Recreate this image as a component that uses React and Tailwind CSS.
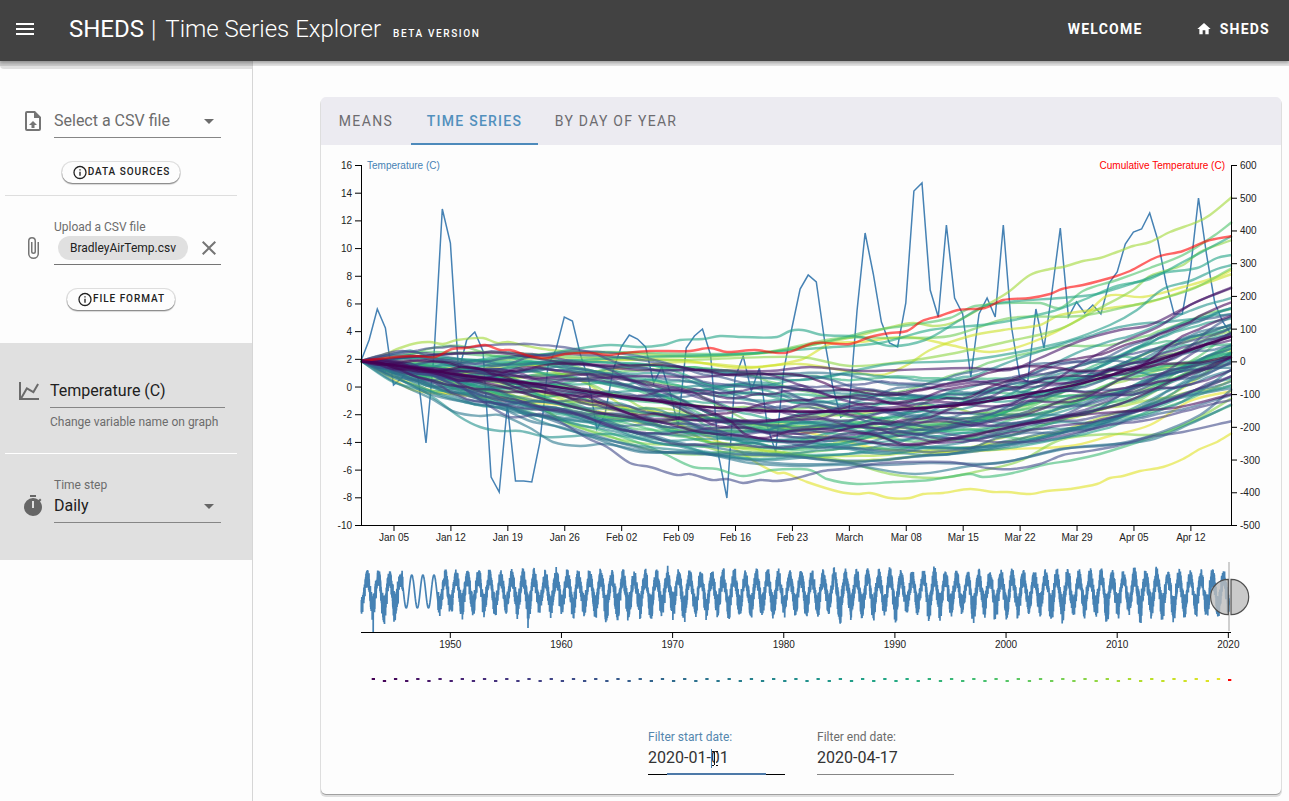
import React from "react";

const ICONS = {
  menu: "M3,6H21V8H3V6M3,11H21V13H3V11M3,16H21V18H3V16Z",
  home: "M10,20V14H14V20H19V12H22L12,3L2,12H5V20H10Z",
  fileUpload:
    "M14,2L20,8V20A2,2 0 0,1 18,22H6A2,2 0 0,1 4,20V4A2,2 0 0,1 6,2H14M18,20V9H13V4H6V20H18M12,12L16,16H13.5V19H10.5V16H8L12,12Z",
  paperclip:
    "M16.5,6V17.5A4,4 0 0,1 12.5,21.5A4,4 0 0,1 8.5,17.5V5A2.5,2.5 0 0,1 11,2.5A2.5,2.5 0 0,1 13.5,5V15.5A1,1 0 0,1 12.5,16.5A1,1 0 0,1 11.5,15.5V6H10V15.5A2.5,2.5 0 0,0 12.5,18A2.5,2.5 0 0,0 15,15.5V5A4,4 0 0,0 11,1A4,4 0 0,0 7,5V17.5A5.5,5.5 0 0,0 12.5,23A5.5,5.5 0 0,0 18,17.5V6H16.5Z",
  chart:
    "M16,11.78L20.24,4.45L21.97,5.45L16.74,14.5L10.23,10.75L5.46,19H22V21H2V3H4V17.54L9.5,8L16,11.78Z",
  info: "M11,9H13V7H11M12,20C7.59,20 4,16.41 4,12C4,7.59 7.59,4 12,4C16.41,4 20,7.59 20,12C20,16.41 16.41,20 12,20M12,2A10,10 0 0,0 2,12A10,10 0 0,0 12,22A10,10 0 0,0 22,12A10,10 0 0,0 12,2M11,17H13V11H11V17Z",
  timer:
    "M19.03,7.39L20.45,5.97C20,5.46 19.55,5 19.04,4.56L17.62,6C16.07,4.74 14.12,4 12,4A9,9 0 0,0 3,13A9,9 0 0,0 12,22C17,22 21,17.97 21,13C21,10.88 20.26,8.93 19.03,7.39M13,14H11V7H13V14M15,1H9V3H15V1Z",
  close:
    "M19,6.41L17.59,5L12,10.59L6.41,5L5,6.41L10.59,12L5,17.59L6.41,19L12,13.41L17.59,19L19,17.59L13.41,12L19,6.41Z",
  down: "M7,10L12,15L17,10H7Z",
};

function Icon({ name, className }) {
  return (
    <svg viewBox="0 0 24 24" fill="currentColor" className={className}>
      <path d={ICONS[name]} />
    </svg>
  );
}

/* ---------- chart data ---------- */

function rng(seed) {
  let a = seed;
  return () => {
    a = (a + 0x6d2b79f5) | 0;
    let t = Math.imul(a ^ (a >>> 15), 1 | a);
    t = (t + Math.imul(t ^ (t >>> 7), 61 | t)) ^ t;
    return ((t ^ (t >>> 14)) >>> 0) / 4294967296;
  };
}

const VIRIDIS = [
  [68, 1, 84], [72, 36, 117], [65, 68, 135], [53, 95, 141], [42, 120, 142],
  [33, 145, 140], [34, 168, 132], [68, 191, 112], [122, 209, 81], [189, 223, 38], [240, 229, 40],
];
function viridis(t) {
  const p = Math.min(0.9999, Math.max(0, t)) * 10;
  const i = Math.floor(p);
  const c = VIRIDIS[i].map((v, k) => Math.round(v + (VIRIDIS[i + 1][k] - v) * (p - i)));
  return `rgb(${c.join(",")})`;
}

const X0 = 361.3;
const DAY = 8.131;

const DAILY = [
  361, 340, 309, 328, 385, 378, 368, 376, 443, 352, 209, 243, 372, 340, 332, 351, 477, 492, 405, 481,
  481, 482, 442, 366, 349, 317, 321, 355, 380, 429, 415, 370, 347, 335, 339, 347, 383, 367, 392, 426,
  348, 336, 329, 355, 457, 498, 378, 356, 391, 368, 427, 452, 370, 328, 289, 275, 282, 340, 386, 417,
  412, 311, 233, 274, 322, 343, 347, 303, 191, 183, 290, 317, 225, 298, 314, 377, 314, 298, 317, 225,
  327, 377, 382, 309, 348, 291, 228, 317, 302, 313, 305, 314, 283, 272, 244, 232, 229, 213, 240, 283,
  314, 314, 270, 198, 255, 303, 322, 334,
];
const dailyPath = "M" + DAILY.map((y, i) => `${(X0 - 0.3 + i * DAY).toFixed(1)},${y}`).join("L");

const MEAN = [[361, 361], [400, 366], [435, 371], [466, 376], [520, 382], [564, 388], [640, 399], [707, 407], [773, 411], [830, 411.5], [890, 410], [970, 404], [1017, 396], [1083, 383], [1150, 363], [1232, 336]];

function interp(pts, x) {
  if (x <= pts[0][0]) return pts[0][1];
  for (let i = 1; i < pts.length; i++) {
    if (x <= pts[i][0]) {
      const [xa, ya] = pts[i - 1];
      const [xb, yb] = pts[i];
      return ya + ((yb - ya) * (x - xa)) / (xb - xa);
    }
  }
  return pts[pts.length - 1][1];
}

function smooth(pts) {
  let d = `M${pts[0][0]},${pts[0][1]}`;
  for (let i = 0; i < pts.length - 1; i++) {
    const [p0, p1, p2, p3] = [pts[i - 1] || pts[i], pts[i], pts[i + 1], pts[i + 2] || pts[i + 1]];
    const m1 = (p2[1] - p0[1]) / (p2[0] - p0[0]);
    const m2 = (p3[1] - p1[1]) / (p3[0] - p1[0]);
    const h = (p2[0] - p1[0]) / 3;
    d += `C${(p1[0] + h).toFixed(1)},${(p1[1] + m1 * h).toFixed(1)} ${(p2[0] - h).toFixed(1)},${(p2[1] - m2 * h).toFixed(1)} ${p2[0]},${p2[1]}`;
  }
  return d;
}

const NAMED = [
  { c: 0.86, p: [[361, 361], [383, 355], [400, 348], [417, 343], [430, 342], [443, 344], [457, 340], [483, 338], [497, 343], [508, 342], [527, 346], [550, 350], [580, 352], [620, 353], [660, 355], [700, 357], [740, 355], [773, 352], [800, 347], [827, 342], [853, 337], [887, 328], [913, 323], [935, 326], [955, 322], [983, 307], [1007, 293], [1030, 275], [1050, 269], [1063, 267], [1083, 261], [1100, 258], [1117, 252], [1133, 246], [1150, 242], [1170, 232], [1197, 222], [1210, 215], [1232, 197]] },
  { c: 0.97, p: [[361, 361], [390, 377], [410, 389], [430, 393], [460, 394], [500, 400], [560, 405], [620, 415], [680, 425], [710, 438], [737, 450], [757, 463], [777, 473], [785, 473], [807, 482], [840, 492], [857, 494], [870, 493], [890, 498], [910, 498], [923, 494], [943, 493], [970, 489], [993, 492], [1007, 492], [1030, 494], [1047, 491], [1070, 489], [1097, 484], [1110, 478], [1123, 476], [1140, 471], [1163, 467], [1183, 459], [1200, 449], [1217, 442], [1232, 433]] },
  { c: 0.22, p: [[361, 361], [400, 368], [453, 380], [470, 393], [507, 416], [520, 417], [540, 414], [557, 420], [587, 438], [607, 447], [630, 463], [650, 467], [677, 475], [690, 474], [712, 480], [727, 479], [743, 483], [760, 480], [777, 481], [797, 478], [823, 471], [843, 469], [873, 464], [907, 462], [950, 462], [965, 464], [987, 468], [1013, 469], [1040, 464], [1063, 455], [1083, 452], [1117, 446], [1150, 437], [1183, 432], [1232, 421]] },
  { c: 0.5, p: [[361, 361], [393, 382], [420, 390], [437, 400], [460, 417], [480, 427], [500, 431], [520, 431], [547, 437], [575, 436], [610, 434], [640, 439], [670, 445], [720, 446], [780, 440], [840, 445], [900, 440], [970, 432], [1050, 415], [1140, 385], [1232, 345]] },
  { c: 0.4, p: [[361, 361], [393, 381], [430, 398], [455, 412], [480, 416], [500, 415], [530, 428], [553, 442], [580, 446], [605, 444], [650, 452], [700, 453], [750, 463], [800, 466], [850, 465], [915, 474], [970, 466], [1010, 461], [1070, 448], [1150, 440], [1190, 424], [1232, 404]] },
  { c: 0.38, p: [[361, 361], [393, 376], [430, 394], [470, 403], [500, 408], [530, 421], [560, 427], [600, 440], [640, 452], [690, 452], [740, 459], [790, 464], [850, 463], [900, 458], [970, 452], [1020, 444], [1070, 436], [1130, 414], [1180, 398], [1232, 388]] },
  { c: 0.33, p: [[361, 361], [430, 385], [490, 402], [540, 416], [590, 434], [650, 450], [700, 454], [760, 455], [820, 459], [870, 465], [930, 463], [1000, 463], [1060, 449], [1110, 445], [1150, 436], [1200, 415], [1232, 389]] },
  { c: 0.45, p: [[361, 361], [430, 380], [490, 398], [540, 421], [590, 436], [640, 446], [700, 452], [760, 460], [820, 456], [880, 452], [940, 455], [1000, 446], [1060, 432], [1120, 414], [1180, 384], [1232, 352]] },
  { c: 0.68, p: [[361, 361], [420, 375], [480, 398], [540, 415], [600, 430], [645, 445], [667, 455], [693, 467], [717, 469], [743, 476], [773, 470], [800, 469], [813, 471], [827, 479], [857, 484], [893, 482], [930, 480], [970, 474], [983, 477], [1013, 473], [1043, 465], [1073, 460], [1100, 454], [1150, 438], [1190, 423], [1232, 405]] },
  { c: 0.82, p: [[361, 361], [440, 372], [520, 398], [580, 428], [640, 443], [700, 446], [740, 456], [790, 455], [840, 460], [890, 474], [940, 478], [975, 472], [1020, 461], [1060, 440], [1110, 434], [1160, 434], [1200, 417], [1232, 398]] },
  { c: 0.98, p: [[361, 361], [430, 390], [500, 398], [580, 402], [660, 412], [740, 422], [820, 435], [880, 449], [950, 452], [1010, 449], [1070, 446], [1110, 436], [1150, 425], [1190, 401], [1232, 391]] },
  { c: 0.58, p: [[361, 361], [420, 357], [480, 360], [540, 355], [575, 349], [610, 345], [640, 347], [663, 345], [680, 340], [703, 339], [720, 336], [743, 337], [777, 337], [790, 331], [802, 330], [823, 335], [860, 337], [890, 346], [925, 340], [960, 320], [985, 306], [1017, 301], [1060, 298], [1097, 294], [1137, 282], [1163, 273], [1197, 268], [1217, 258], [1232, 255]] },
  { c: 0.72, p: [[361, 361], [430, 352], [500, 356], [600, 352], [700, 354], [770, 352], [830, 341], [870, 331], [910, 325], [950, 318], [975, 306], [1040, 303], [1060, 308], [1083, 291], [1117, 280], [1150, 268], [1183, 255], [1215, 235], [1232, 222]] },
  { c: 0.6, p: [[361, 361], [430, 358], [520, 362], [640, 357], [740, 354], [820, 348], [880, 343], [930, 330], [990, 324], [1050, 312], [1083, 300], [1117, 286], [1150, 279], [1183, 262], [1232, 236]] },
  { c: 0.83, p: [[361, 361], [450, 362], [560, 358], [680, 360], [800, 357], [850, 366], [900, 362], [950, 354], [1010, 341], [1060, 329], [1100, 308], [1133, 290], [1150, 276], [1183, 265], [1200, 252], [1232, 240]] },
  { c: 0.55, p: [[361, 361], [480, 366], [600, 362], [720, 372], [800, 380], [890, 364], [970, 360], [1060, 343], [1110, 325], [1137, 310], [1163, 289], [1190, 281], [1217, 269], [1232, 265]] },
  { c: 0.95, p: [[361, 361], [470, 369], [590, 361], [680, 360], [740, 368], [800, 360], [830, 344], [860, 342], [908, 337], [950, 345], [990, 352], [1030, 343], [1083, 317], [1107, 296], [1143, 297], [1183, 287], [1217, 277], [1232, 270]] },
  { c: 0.93, p: [[361, 361], [460, 378], [590, 372], [680, 362], [750, 367], [800, 364], [880, 375], [907, 365], [930, 350], [970, 336], [1003, 330], [1040, 325], [1060, 315], [1110, 308], [1150, 302], [1232, 274]] },
  { c: 0.78, p: [[361, 361], [480, 352], [560, 356], [650, 357], [760, 353], [840, 338], [900, 338], [950, 336], [1010, 318], [1080, 316], [1130, 306], [1190, 290], [1232, 268]] },
  { c: 0.06, p: [[361, 361], [450, 354], [500, 353], [560, 362], [640, 370], [700, 370], [770, 371], [810, 367], [860, 371], [900, 370], [970, 368], [1010, 370], [1040, 358], [1080, 341], [1120, 330], [1150, 325], [1190, 305], [1210, 296], [1232, 287]] },
  { c: 0.08, p: [[361, 361], [460, 371], [560, 379], [640, 376], [700, 377], [760, 373], [800, 385], [840, 399], [880, 408], [940, 402], [1000, 406], [1040, 390], [1080, 364], [1120, 343], [1160, 326], [1190, 305], [1232, 288]] },
  { c: 0.03, p: [[361, 361], [440, 373], [500, 386], [540, 398], [600, 413], [660, 422], [700, 432], [740, 436], [800, 442], [840, 438], [900, 445], [960, 437], [1020, 425], [1080, 415], [1130, 411], [1180, 407], [1232, 394]] },
  { c: 0.04, p: [[361, 361], [440, 371], [520, 384], [600, 396], [660, 400], [700, 408], [730, 421], [745, 434], [765, 438], [790, 431], [820, 429], [870, 434], [910, 445], [960, 438], [1020, 425], [1060, 417], [1120, 404], [1180, 377], [1232, 357]] },
];

const FAMILY = (() => {
  const out = [];
  const total = 62;
  for (let i = 0; i < total; i++) {
    const r = rng(1943 + i * 7919);
    const g = () => (r() + r() + r() + r() - 2) * 1.73;
    let v = g() * 1.2 + 0.2;
    let dev = 0;
    const pts = [];
    for (let d = 0; d <= 107; d++) {
      const x = X0 + d * DAY;
      const limit = dev < 0 ? 54 : 64 + (d > 75 ? (d - 75) * 0.3 : 0);
      const bounded = limit * Math.tanh(dev / limit);
      pts.push([x.toFixed(1), (interp(MEAN, x) + bounded).toFixed(1)]);
      v = v * 0.78 + g() * 1.05 + 0.05;
      dev = dev * 0.99 + v;
    }
    // Hue index is spread so that the mid-range years dominate the band.
    const u = i / (total - 1);
    out.push({ c: u < 0.9 ? u : 0.4 + (u - 0.9) * 3, d: "M" + pts.join("L") });
  }
  return out;
})();

const LINES = [...FAMILY, ...NAMED.map((n) => ({ c: n.c, d: smooth(n.p) }))].sort((a, b) => b.c - a.c);

const RED = smooth([[361, 361], [395, 357], [418, 356], [435, 357], [452, 349], [465, 348], [485, 345], [500, 350], [510, 350], [530, 356], [547, 358], [565, 354], [590, 353], [610, 355], [625, 353], [650, 351], [690, 351], [710, 348], [727, 352], [755, 350], [785, 353], [815, 343], [850, 344], [870, 337], [890, 333], [907, 331], [922, 321], [940, 316], [958, 310], [985, 308], [1003, 300], [1030, 298], [1050, 294], [1062, 289], [1083, 285], [1110, 278], [1130, 271], [1157, 257], [1183, 251], [1207, 241], [1232, 236]]);

const YEAR = 11.12;
const OVERVIEW = (() => {
  const r = rng(77);
  const pts = [];
  const peaks = Array.from({ length: 80 }, () => [r() * 4 - 1.5, r() * 11 - 5]);
  for (let x = 361.3; x <= 1229.2; x += 0.1) {
    const t = (x - 361.3) / YEAR;
    const s = (1 - Math.cos(2 * Math.PI * (t - 0.04))) / 2;
    if (x > 403 && x < 438) {
      pts.push(`${x.toFixed(1)},${(608 - 33 * s).toFixed(1)}`);
      continue;
    }
    const [pk, tr] = peaks[Math.floor(t + (s < 0.5 ? 0.5 : 0))];
    const mid = 604 - 27 * s;
    const up = 11 - s + pk * s;
    const down = (1 - s) * (18 + tr) + s * 11;
    const n = (r() * 2 - 1) * (0.7 + 0.3 * r());
    pts.push(`${x.toFixed(1)},${(mid + (n < 0 ? n * up : n * down)).toFixed(1)}`);
    if (Math.abs(x - 373.2) < 0.05) pts.push("373.2,632");
    if (Math.abs(x - 528) < 0.05) pts.push("528,628");
  }
  return "M" + pts.join("L");
})();

const LEFT_TICKS = [16, 14, 12, 10, 8, 6, 4, 2, 0, -2, -4, -6, -8, -10];
const RIGHT_TICKS = [600, 500, 400, 300, 200, 100, 0, -100, -200, -300, -400, -500];
const DATE_TICKS = ["Jan 05", "Jan 12", "Jan 19", "Jan 26", "Feb 02", "Feb 09", "Feb 16", "Feb 23", "March", "Mar 08", "Mar 15", "Mar 22", "Mar 29", "Apr 05", "Apr 12"];
const YEAR_TICKS = [1950, 1960, 1970, 1980, 1990, 2000, 2010, 2020];

function Chart() {
  return (
    <svg
      viewBox="321 145 960 556"
      className="block h-[556px] w-[960px] font-['Liberation_Sans',Arial,sans-serif] text-[10px]"
    >
      <path d={dailyPath} fill="none" stroke="#4682b4" strokeWidth="1.5" />
      <g fill="none" strokeWidth="2.4" strokeOpacity="0.6">
        {LINES.map((l, i) => (
          <path key={i} d={l.d} stroke={viridis(l.c)} />
        ))}
        <path d={RED} stroke="#ff0000" />
      </g>
      <path d={smooth(MEAN)} fill="none" stroke="#440154" strokeWidth="2.6" strokeOpacity="0.9" />

      <g stroke="#000" fill="none" shapeRendering="crispEdges">
        <path d="M355,165.5H361.5V525.5H355" />
        <path d="M1237,165.5H1231.5V525.5H1237" />
        <path d="M361,525.5H1232" />
        <path d="M361,632.5H1231" />
      </g>
      <g stroke="#000">
        {LEFT_TICKS.map((v, i) => (
          <path key={v} d={`M355,${165.5 + (i * 360) / 13}H361`} />
        ))}
        {RIGHT_TICKS.map((v, i) => (
          <path key={v} d={`M1232,${165.5 + (i * 360) / 11}H1237`} />
        ))}
        {DATE_TICKS.map((v, i) => (
          <path key={v} d={`M${394 + i * 56.92},526V531`} />
        ))}
        {YEAR_TICKS.map((v, i) => (
          <path key={v} d={`M${450.3 + i * 111.15},633V638`} />
        ))}
      </g>
      <g fill="#222">
        {LEFT_TICKS.map((v, i) => (
          <text key={v} x="352" y={169 + (i * 360) / 13} textAnchor="end">{v}</text>
        ))}
        {RIGHT_TICKS.map((v, i) => (
          <text key={v} x="1240" y={169 + (i * 360) / 11}>{v}</text>
        ))}
        {DATE_TICKS.map((v, i) => (
          <text key={v} x={394 + i * 56.92} y="541" textAnchor="middle">{v}</text>
        ))}
        {YEAR_TICKS.map((v, i) => (
          <text key={v} x={450.3 + i * 111.15} y="648" textAnchor="middle">{v}</text>
        ))}
      </g>
      <text x="367" y="169" fill="#4682b4">Temperature (C)</text>
      <text x="1225" y="169" fill="#ff0000" textAnchor="end">Cumulative Temperature (C)</text>

      <path d={OVERVIEW} fill="none" stroke="#4682b4" strokeWidth="1.7" strokeLinejoin="bevel" />
      <rect x="1228" y="562" width="2" height="69" fill="#777" fillOpacity="0.35" />
      <g fill="#bdbdbd" fillOpacity="0.8" stroke="#4f4f4f" strokeWidth="1.2">
        <path d="M1228.3,579.3A17.7,17.7 0 0 0 1228.3,614.7Z" />
        <path d="M1231,579.3A17.7,17.7 0 0 1 1231,614.7Z" />
      </g>

      {Array.from({ length: 77 }, (_, i) => (
        <rect key={i} x={371.7 + i * YEAR} y={i % 2 ? 680 : 678} width="3.3" height="2" fill={viridis(i / 78)} />
      ))}
      <rect x="1228" y="679" width="3.3" height="2" fill="#ff0000" />
    </svg>
  );
}

/* ---------- page parts ---------- */

function PillButton({ children, className }) {
  return (
    <button
      className={`flex h-[21px] items-center justify-center rounded-full bg-[#fdfdfd] pb-px text-[10px] font-medium leading-none tracking-[0.95px] text-[#212121] shadow-[0_1px_1px_rgba(0,0,0,0.3),0_2px_1px_rgba(0,0,0,0.12),0_0_0_1px_rgba(0,0,0,0.12)] ${className}`}
    >
      <Icon name="info" className="h-4 w-4 translate-y-[0.5px]" />
      <span>{children}</span>
    </button>
  );
}

function Header() {
  return (
    <header className="relative z-10 flex h-[61px] shrink-0 items-center bg-[#424242] text-white shadow-[0_2px_3px_rgba(0,0,0,0.28),0_5px_0_rgba(0,0,0,0.1)]">
      <Icon name="menu" className="-mt-[3px] ml-[13px] h-6 w-6" />
      <h1 className="ml-8 flex items-baseline whitespace-nowrap pt-0.5 text-2xl leading-8">
        <span>SHEDS</span>
        <span className="ml-[7px] font-light">|</span>
        <span className="ml-[9px] font-light">Time Series Explorer</span>
        <span className="ml-3 text-[10px] font-medium tracking-[1.62px]">BETA VERSION</span>
      </h1>
      <nav className="-mt-[3px] ml-auto flex items-center pr-[19px] text-sm font-bold tracking-[1.25px]">
        <a className="mr-[53px]">WELCOME</a>
        <Icon name="home" className="mr-2 h-4 w-4" />
        <a>SHEDS</a>
      </nav>
    </header>
  );
}

function Sidebar() {
  return (
    <aside className="flex w-[253px] shrink-0 flex-col border-r border-[#d6d6d6]">
      <div className="h-2 rounded-bl bg-[#e0e0e0]" />
      <div className="mt-9 flex h-[33px] pl-[21px]">
        <Icon name="fileUpload" className="mt-1 h-6 w-6 text-[#757575]" />
        <div className="ml-[9px] flex w-[167px] items-center border-b border-[#868686] text-base text-[#6c6c6c]">
          <span className="flex-1">Select a CSV file</span>
          <Icon name="down" className="h-6 w-6" />
        </div>
      </div>
      <PillButton className="ml-[62px] mt-6 w-[118px]">DATA SOURCES</PillButton>
      <hr className="ml-[5px] mt-3 w-[232px] border-[#dedede]" />

      <div className="mt-6 flex h-[45px] pl-[21px]">
        <Icon name="paperclip" className="mt-4 h-6 w-6 text-[#757575]" />
        <div className="ml-[9px] w-[167px] border-b border-[#757575]">
          <div className="h-4 text-xs leading-[14px] text-[#6c6c6c]">Upload a CSV file</div>
          <div className="flex items-center">
            <span className="ml-1 flex h-6 w-[130px] items-center justify-center rounded-full bg-[#e0e0e0] text-xs text-[#212121]">
              BradleyAirTemp.csv
            </span>
            <Icon name="close" className="ml-auto h-6 w-6 text-[#757575]" />
          </div>
        </div>
      </div>
      <PillButton className="ml-[67px] mt-6 w-[108px]">FILE FORMAT</PillButton>

      <section className="mt-[33px] flex h-[217px] flex-col bg-[#e0e0e0]">
        <div className="mt-8 flex h-[33px] pl-[17px]">
          <Icon name="chart" className="mt-1 h-6 w-6 text-[#6b6b6b]" />
          <div className="ml-[9px] flex w-[175px] items-center border-b border-[#868686] text-base text-[#212121]">
            <span>Temperature (C)</span>
          </div>
        </div>
        <div className="ml-[50px] mt-1.5 text-xs text-[#6c6c6c]">Change variable name on graph</div>
        <hr className="ml-[5px] mt-[23px] w-[232px] border-white" />
        <div className="mt-6 flex h-[45px] pl-[21px]">
          <Icon name="timer" className="mt-4 h-6 w-6 text-[#666]" />
          <div className="ml-[9px] w-[167px] border-b border-[#868686]">
            <div className="h-4 text-xs leading-[14px] text-[#6c6c6c]">Time step</div>
            <div className="flex h-6 items-center text-base text-[#212121]">
              <span className="flex-1">Daily</span>
              <Icon name="down" className="h-6 w-6 text-[#666]" />
            </div>
          </div>
        </div>
      </section>
    </aside>
  );
}

function Filters() {
  return (
    <div className="mt-[29px] flex justify-center gap-8">
      <div className="flex h-[45px] w-[137px] flex-col border-b border-black">
        <label className="text-xs leading-[14px] text-[#5486ad]">Filter start date:</label>
        <div className="relative mt-0.5 text-base text-[#333]">
          2020-01-01
          <svg viewBox="0 0 9 18" className="absolute left-[62px] top-[3px] h-[18px] w-[9px] overflow-visible">
            <path d="M1.5,0V19" stroke="#4682b4" fill="none" />
            <path d="M2,2.5H4M6,2.5H8M4.5,3V16M2,16.5H4M6,16.5H8" stroke="#111" fill="none" strokeWidth="1" />
            <path d="M5.5,3V16" stroke="#fff" fill="none" strokeWidth="1" />
          </svg>
        </div>
        <div className="ml-[19px] mt-auto h-0.5 w-[99px] translate-y-px bg-[#4d79a8]" />
      </div>
      <div className="flex h-[45px] w-[137px] flex-col border-b border-[#868686]">
        <label className="text-xs leading-[14px] text-[#6c6c6c]">Filter end date:</label>
        <div className="mt-0.5 text-base text-[#333]">2020-04-17</div>
      </div>
    </div>
  );
}

export default function App() {
  return (
    <div className="flex h-[801px] w-[1289px] flex-col overflow-hidden bg-[#fdfdfd] font-[Roboto,'Liberation_Sans',sans-serif]">
      <Header />
      <div className="flex min-h-0 flex-1">
        <Sidebar />
        <main className="flex-1 pl-[68px] pt-9">
          <div className="h-[697px] w-[960px] rounded-[5px] bg-[#fdfdfd] shadow-[0_1px_0_#a0a0a0,0_2px_0_1px_#dedede]">
            <div className="flex h-12 rounded-t-[5px] bg-[#ecebf1] text-sm font-medium leading-none tracking-[1.25px] text-[#6d6c70]">
              <div className="flex w-[90px] items-center justify-center font-normal tracking-[1.4px]">MEANS</div>
              <div className="flex w-[127px] items-center justify-center border-b-2 border-[#4d8abb] pt-0.5 text-[#5290bd]">
                TIME SERIES
              </div>
              <div className="flex w-[156px] items-center justify-center font-normal tracking-[1.27px]">BY DAY OF YEAR</div>
            </div>
            <Chart />
            <Filters />
          </div>
        </main>
      </div>
    </div>
  );
}
